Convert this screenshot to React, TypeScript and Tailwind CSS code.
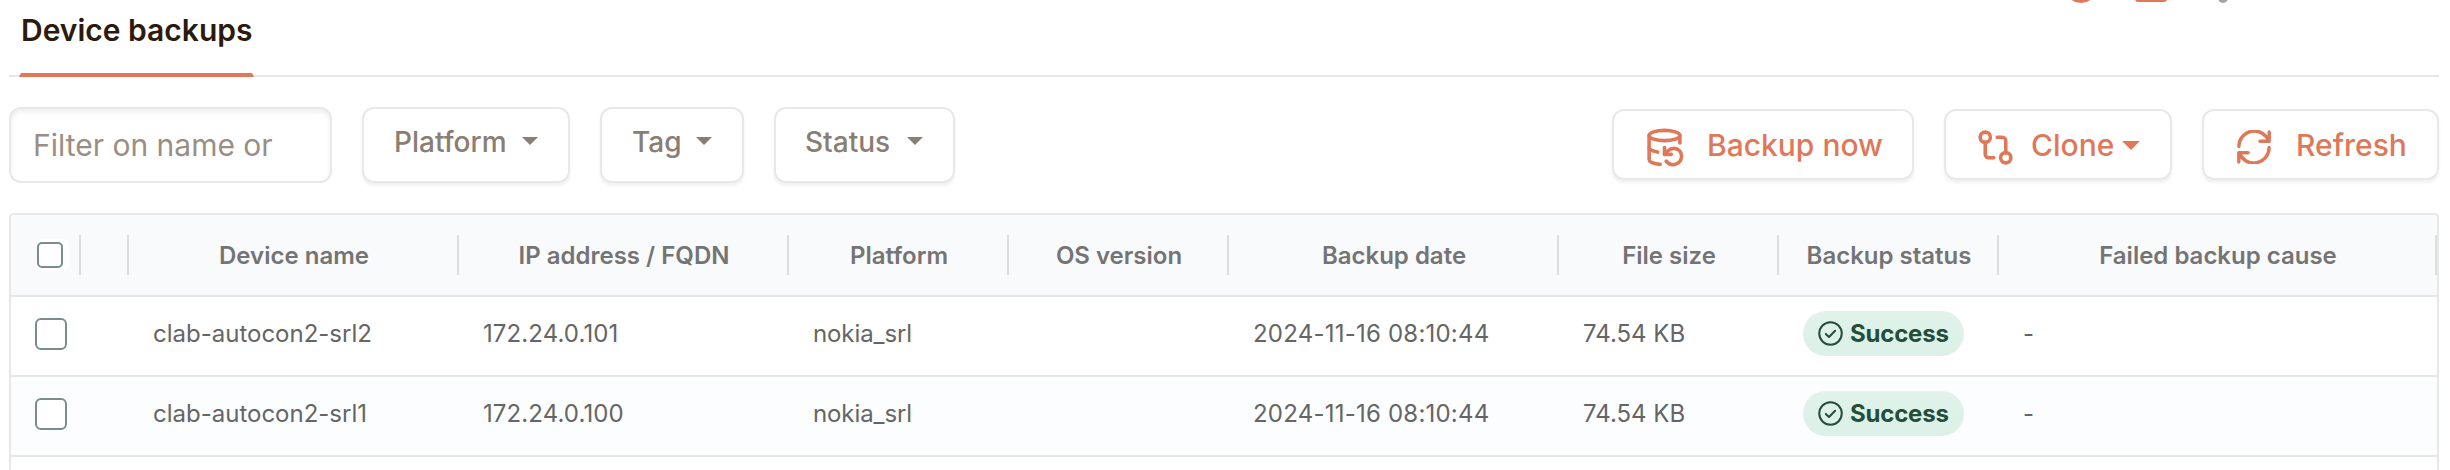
import { DatabaseBackup, GitCompare } from "lucide-react";
import type { ReactNode } from "react";

function Caret({ className }: { className: string }) {
  return (
    <svg viewBox="0 0 16 8" preserveAspectRatio="none" className={className} fill="currentColor">
      <path d="M0 0h16L8 8z" />
    </svg>
  );
}

function RefreshIcon({ className }: { className: string }) {
  return (
    <svg viewBox="0 0 34 34" className={className} fill="none" stroke="currentColor" strokeWidth={3.4} strokeLinecap="round" strokeLinejoin="round">
      <path d="M1.9 16.5A15.3 15.3 0 0 1 31.6 11.1M32.2 1.9v9.3h-9.3" />
      <path d="M32.1 17.5A15.3 15.3 0 0 1 2.4 22.9M1.8 32.1v-9.3h9.3" />
    </svg>
  );
}

function FilterButton({ label, className }: { label: string; className: string }) {
  return (
    <button className={`flex h-[76px] items-start rounded-xl border-2 border-[#e8e8e8] pt-[15px] text-[28px] leading-[36px] font-medium text-[#897d74] shadow-[0_3px_3px_rgba(0,0,0,0.06)] ${className}`}>
      <span>{label}</span>
      <Caret className="mt-[13px] ml-auto h-2 w-4" />
    </button>
  );
}

function ActionButton({ children, className }: { children: ReactNode; className: string }) {
  return (
    <button className={`flex h-[71px] items-center rounded-xl border-2 border-[#e8e8e8] pt-[2px] text-[30px] font-medium text-[#df7858] shadow-[0_3px_3px_rgba(0,0,0,0.06)] ${className}`}>
      {children}
    </button>
  );
}

const columns = "grid grid-cols-[70px_48px_330px_330px_220px_220px_330px_220px_220px_438px]";

const headers = ["", "Device name", "IP address / FQDN", "Platform", "OS version", "Backup date", "File size", "Backup status", "Failed backup cause"];

const rows = [
  { name: "clab-autocon2-srl2", ip: "172.24.0.101", striped: false },
  { name: "clab-autocon2-srl1", ip: "172.24.0.100", striped: true },
];

export default function App() {
  return (
    <div className="relative h-[470px] w-[2450px] overflow-hidden bg-white pr-[11px] pl-[9px] font-['Inter',sans-serif]">
      <div className="absolute -top-[29px] left-[2065px] size-8 rounded-full bg-[#df7858]" />
      <div className="absolute -top-2 left-[2135px] h-[10px] w-8 rounded-[3px] bg-[#df7858]" />
      <div className="absolute -top-[7px] left-[2218px] size-[10px] rounded-full bg-[#a0a3a8]" />

      <nav className="flex h-[77px] border-b-2 border-[#e8e8e8] pl-[10px]">
        <div className="h-[77px] w-[235px] border-x-2 border-b-4 border-x-transparent border-b-[#df7858] pt-[11px] text-[30px] leading-[38px] font-semibold whitespace-nowrap text-[#2c1a0c]">
          Device backups
        </div>
      </nav>

      <div className="mt-[30px] flex">
        <input
          placeholder="Filter on name or"
          className="h-[76px] w-[323px] rounded-xl border-2 border-[#e8e8e8] px-[22px] text-[30px] text-[#9a8e84] shadow-[inset_0_3px_5px_rgba(0,0,0,0.07)] placeholder:text-[#9a8e84]"
        />
        <FilterButton label="Platform" className="ml-[30px] w-[208px] pr-[30px] pl-[30px]" />
        <FilterButton label="Tag" className="ml-[30px] w-[144px] pr-[30px] pl-[30px]" />
        <FilterButton label="Status" className="ml-[30px] w-[181px] pr-[30px] pl-[29px]" />
        <div className="mt-[2px] ml-auto flex gap-[30px]">
          <ActionButton className="w-[302px] pl-[30px]">
            <DatabaseBackup className="mt-[3px] size-[41px]" strokeWidth={2.1} />
            <span className="ml-[22px]">Backup now</span>
          </ActionButton>
          <ActionButton className="w-[228px] pl-[29px]">
            <GitCompare className="mt-[3px] size-[41px]" strokeWidth={2.1} />
            <span className="ml-[15px]">Clone</span>
            <Caret className="ml-2 h-[9px] w-[18px]" />
          </ActionButton>
          <ActionButton className="w-[237px] pl-[33px]">
            <RefreshIcon className="mt-[3px] size-[34px]" />
            <span className="ml-[25px]">Refresh</span>
          </ActionButton>
        </div>
      </div>

      <div className="mt-[30px] h-[270px] overflow-hidden rounded-t-[5px] border-2 border-b-0 border-[#e8e8e8] text-2xl whitespace-nowrap text-[#656565]">
        <div className={`${columns} h-[82px] border-b-2 border-[#e5e6e8] bg-[#f9fafc] font-semibold text-[#747474]`}>
          <div className="flex items-center">
            <div className="ml-[26px] flex h-8 w-8 items-center rounded-md bg-white">
              <div className="size-[26px] rounded-[5px] border-2 border-[#7c8b8b]" />
            </div>
            <div className="ml-auto h-10 w-[2px] bg-[#dcdddf]" />
          </div>
          {headers.map((label, i) => (
            <div key={i} className="flex items-center">
              <div className="flex-1 pt-[2px] pl-[2px] text-center">{label}</div>
              <div className="h-10 w-[2px] bg-[#dcdddf]" />
            </div>
          ))}
        </div>
        {rows.map((row) => (
          <div key={row.name} className={`${columns} h-20 items-center border-b-2 border-[#e5e6e8] ${row.striped ? "bg-[#fcfdfe]" : "bg-white"}`}>
            <div className="mb-1 ml-6 size-8 rounded-md border-2 border-[#7c8b8b] bg-white" />
            <div />
            <div className="pb-[5px] pl-6">{row.name}</div>
            <div className="pb-[5px] pl-6 tracking-[0.1px]">{row.ip}</div>
            <div className="pb-[5px] pl-6 tracking-[-0.1px]">nokia_srl</div>
            <div />
            <div className="pb-[5px] pl-6 tracking-[0.22px]">2024-11-16 08:10:44</div>
            <div className="pb-[5px] pl-6">74.54 KB</div>
            <div className="pb-[5px] pl-6">
              <div className="flex h-[45px] w-[161px] items-center rounded-full bg-linear-to-b from-[#e1f3eb] to-[#dbf0e6] pl-[14px] font-bold tracking-[-0.2px] text-[#234e3c]">
                <svg viewBox="0 0 24 24" className="size-[27px]" fill="none" stroke="currentColor" strokeWidth={1.8} strokeLinecap="round" strokeLinejoin="round">
                  <circle cx="12" cy="12" r="10" />
                  <path d="m7.8 12.4 2.9 2.7 5.4-5.5" />
                </svg>
                <span className="ml-[6px]">Success</span>
              </div>
            </div>
            <div className="pb-[5px] pl-6">-</div>
          </div>
        ))}
      </div>
    </div>
  );
}
